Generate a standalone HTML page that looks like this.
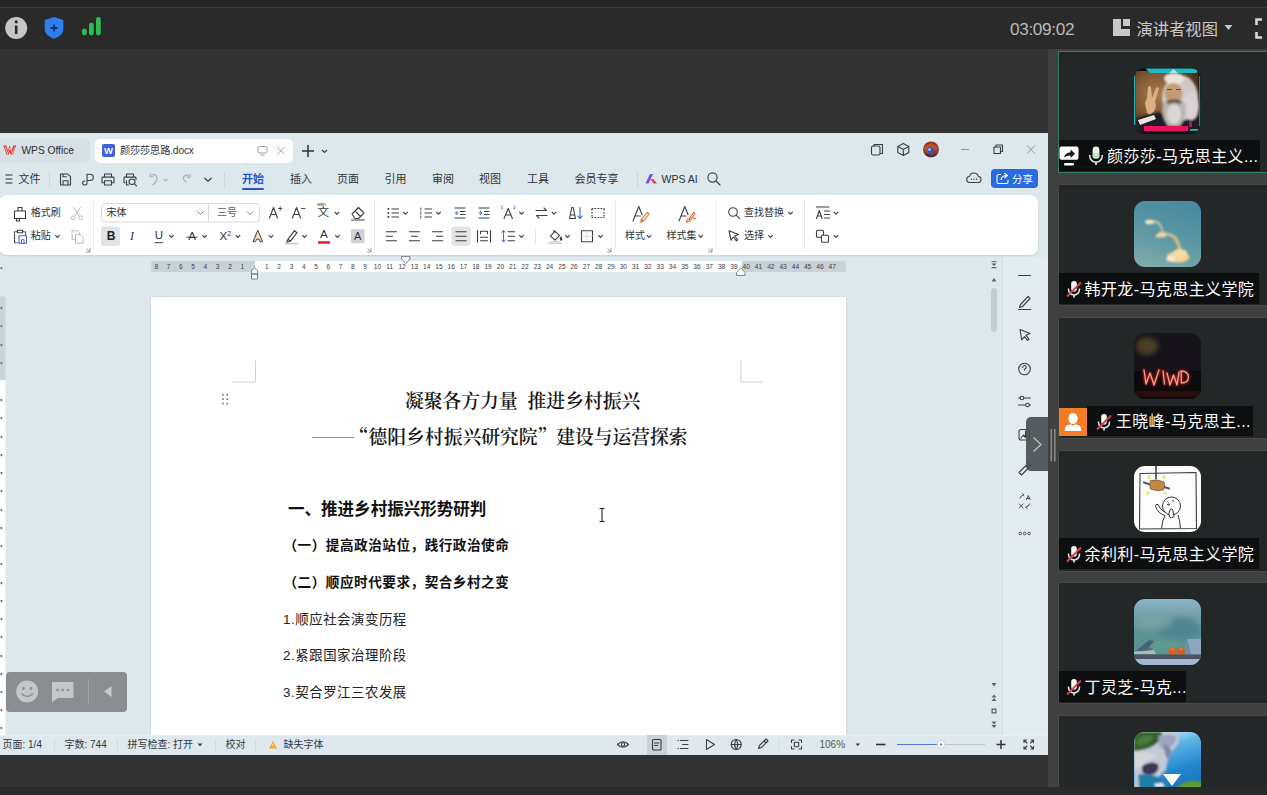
<!DOCTYPE html>
<html lang="zh-CN">
<head>
<meta charset="utf-8">
<title>会议 - 颜莎莎思路.docx</title>
<style>
*{box-sizing:border-box;margin:0;padding:0}
html,body{width:1267px;height:795px;overflow:hidden;background:#333333}
body{position:relative;font-family:"Liberation Sans","Noto Sans CJK SC",sans-serif;color:#222;font-size:12px}
.abs{position:absolute}
svg{position:absolute;overflow:visible}
/* meeting frame */
#topstrip{left:0;top:0;width:1267px;height:8px;background:#262626;border-bottom:1px solid #3b3b3b}
#topbar{left:0;top:8px;width:1267px;height:41px;background:#2a2a2a}
#bottomband{left:0;top:787px;width:1267px;height:8px;background:#2a2a2a}
#rightpanel{left:1048px;top:49px;width:219px;height:738px;background:#404040}
.tile{left:1058px;width:216px;height:122px;background:#232728;border:1.500px solid #464a4b;border-radius:2px}
.tile.active{border:1.500px solid #2e7d63;border-radius:0}
.avatar{left:74.500px;top:15.700px;width:67px;height:66px;border-radius:11px;overflow:hidden}
.label{left:0;top:87.500px;height:31.300px;background:#0c0e0f;color:#fff;font-size:16px;line-height:31.300px;letter-spacing:0.400px;white-space:nowrap;font-family:"Liberation Sans","Noto Sans CJK SC",sans-serif}
.time{color:#b9b9b9;font-size:17.200px;left:1010px;top:19px;line-height:20px;letter-spacing:-0.350px}
.view{color:#c9c9c9;font-size:16.300px;left:1136.500px;top:17.500px;line-height:22px}
/* WPS */
#wpsbg{left:0;top:133px;width:1048px;height:622px;background:#dde8ec}
#wps{left:0;top:0;width:1048px;height:755px;background:transparent;overflow:hidden}
#wps .t{position:absolute;white-space:nowrap;color:#30353a;font-size:11px;line-height:14px}
#wps .m{font-size:11px;top:172px;color:#2e3338}
#wps .r{font-size:10px;color:#2e3338}
#wps .s{font-size:10px;top:738px;color:#33383d}
.ic{stroke:#3a3f44;stroke-width:1.1;fill:none;stroke-linecap:round;stroke-linejoin:round}
.ar{fill:#444}
#ribbon{left:-1px;top:194.500px;width:1038.500px;height:60px;box-shadow:0 1px 2px rgba(150,170,180,.35);background:#fff;border-radius:8px}
#page{left:151px;top:297px;width:695px;height:440px;background:#fff;box-shadow:0 0 2px rgba(120,140,150,.35)}
.doc{position:absolute;white-space:nowrap;color:#111}
.serif{font-family:"Liberation Serif","Noto Serif CJK SC",serif;font-weight:600;color:#161616}
.hei{font-family:"Liberation Sans","Noto Sans CJK SC",sans-serif;font-weight:700}
.q{font-family:"Noto Serif CJK SC",serif;display:inline-block;width:18.780px;text-align:center}
.rn{position:absolute;top:262px;font-size:6.600px;line-height:9px;color:#3c4146;width:14px;text-align:center;font-weight:400}

</style>
</head>
<body>
<div id="topstrip" class="abs"></div>
<div id="topbar" class="abs"></div>
<div id="rightpanel" class="abs"></div>
<div id="bottomband" class="abs"></div>

<!-- top bar icons -->
<svg class="abs" style="left:0;top:0" width="120" height="49" viewBox="0 0 120 49">
  <circle cx="16.2" cy="28" r="11" fill="#c6c6c6"/>
  <rect x="14.9" y="25.5" width="2.6" height="8.5" fill="#2a2a2a"/>
  <circle cx="16.2" cy="21.8" r="1.6" fill="#2a2a2a"/>
  <path d="M54 17 L63.3 20 L63.3 30 Q63.3 35 54 38.8 Q44.7 35 44.7 30 L44.7 20 Z" fill="#2d7ff0"/>
  <path d="M50.5 28h7M54 24.5v7" stroke="#14305c" stroke-width="1.8" fill="none"/>
  <rect x="82" y="28.5" width="4.8" height="7" rx="2.4" fill="#2ebd52"/>
  <rect x="89" y="22.8" width="4.8" height="12.7" rx="2.4" fill="#2ebd52"/>
  <rect x="96" y="17" width="4.8" height="18.5" rx="2.4" fill="#2ebd52"/>
</svg>
<div class="abs time">03:09:02</div>
<svg class="abs" style="left:1113px;top:19px" width="18" height="18" viewBox="0 0 18 18">
  <path d="M0 0h8v10h9v7h-17z" fill="#c9c9c9"/>
  <rect x="10" y="0" width="7" height="7" fill="#c9c9c9"/>
</svg>
<div class="abs view">演讲者视图</div>
<svg class="abs" style="left:1224px;top:24px" width="10" height="8" viewBox="0 0 10 8"><path d="M0.5 1h8l-4 5z" fill="#c9c9c9"/></svg>
<svg class="abs" style="left:1255.300px;top:18px" width="13" height="22" viewBox="0 0 13 22">
  <path d="M7 1.5H1.5V7M1.5 14v5.5H7" stroke="#d8d8d8" stroke-width="2.6" fill="none"/>
</svg>

<svg class="abs" style="left:1049px;top:426px" width="9" height="37" viewBox="0 0 9 37"><path d="M2.300 3v32.500M5.800 3v32.500" stroke="#8c8c8c" stroke-width="1.500"/></svg>
<!-- TILES -->
<div class="abs tile active" style="top:51.300px" id="t1"><div class="abs avatar"><svg width="67" height="66" viewBox="0 0 67 66" style="left:0;top:0">
<defs><radialGradient id="g1" cx="35%" cy="40%" r="75%"><stop offset="0" stop-color="#a97c52"/><stop offset="0.55" stop-color="#7c5230"/><stop offset="1" stop-color="#3c2616"/></radialGradient>
<filter id="b1" x="-20%" y="-20%" width="140%" height="140%"><feGaussianBlur stdDeviation="1.1"/></filter><filter id="b1s" x="-20%" y="-20%" width="140%" height="140%"><feGaussianBlur stdDeviation="0.5"/></filter></defs>
<rect width="67" height="66" fill="#0d1114"/>
<rect x="1.500" y="3" width="63" height="58" fill="url(#g1)"/>
<g filter="url(#b1)">
<path d="M2 50l22-6l16 6l26-4v18H2z" fill="#1d1f27"/>
<ellipse cx="46" cy="30" rx="18" ry="23" fill="#cfcac6"/>
<ellipse cx="57" cy="38" rx="8" ry="14" fill="#d9d3d6"/>
<ellipse cx="40" cy="10.500" rx="10" ry="5.500" fill="#e9e4dc"/>
<ellipse cx="39.500" cy="25" rx="9" ry="10" fill="#c69a73"/>
<path d="M29 35q10-7 22 0q3 12-5 23h-12q-8-11-5-23z" fill="#b7b4b1"/>
<ellipse cx="40" cy="46" rx="7" ry="10" fill="#d9d7d4"/>
<path d="M32 33q8-4 16 0l-2 3q-6-2-12 0z" fill="#6a5a4c"/>
</g>
<g filter="url(#b1s)">
<path d="M13 45l-2-10l2-5l1-11q1.500-2 3 0l1 11l4-10q2-1.500 3 .5l-4 13q2 5-1 10l-4 3z" fill="#dcb080"/>
<path d="M4 52l16-5l2 4l-16 6z" fill="#ebe6df"/>
<path d="M33 21.500h5M42 21.500h5" stroke="#6b4c35" stroke-width="1.200"/>
</g>
<rect x="10" y="58" width="44" height="5" fill="#e8125e"/>
<path d="M55 54l3 0v5l-3 0z" fill="#d91a5f" opacity=".8"/>
<path d="M11.500 0.500h53.500l-2.500 4.500H16z" fill="#1fb9c0"/><rect x="0" y="7" width="1.300" height="50" fill="#21b0b8"/><rect x="65" y="8" width="1.200" height="50" fill="#1a8b93"/><rect x="56" y="61" width="8" height="1.800" fill="#27b3ae"/>
<path d="M35 5l4.500-4l4.500 4z" fill="#a9e4e0"/>
</svg></div><div class="abs label" style="left:0px;width:201px"><svg style="left:0px;top:6.5px" width="21" height="22" viewBox="0 0 21 22"><rect x="0.5" y="0.5" width="19" height="13.3" rx="2" fill="#fff"/><rect x="5" y="17" width="10" height="2.4" rx="1.2" fill="#fff"/><path d="M5 11.5q1-5 6.5-5.2V3.6l4.6 4.2l-4.6 4.2V9.4q-4 0-6.500 2.100z" fill="#1a1d1f"/></svg><svg style="left:29px;top:6px" width="16" height="20" viewBox="0 0 16 20"><rect x="4.6" y="0.5" width="6.8" height="12" rx="3.4" fill="#e9f3ea"/><rect x="4.6" y="7" width="6.8" height="5.5" rx="2.6" fill="#bfe5c4"/><path d="M1.8 9v1a6.2 6.2 0 0 0 12.4 0v-1" stroke="#e4e4e4" stroke-width="1.6" fill="none"/><path d="M8 16v3" stroke="#e4e4e4" stroke-width="1.8"/></svg><span class="abs" style="left:48px;top:1px">颜莎莎-马克思主义...</span></div></div>
<div class="abs tile" style="top:184px" id="t2"><div class="abs avatar"><svg width="68" height="67" viewBox="0 0 68 67" style="left:0;top:0">
<defs><linearGradient id="g2" x1="0.600" y1="0" x2="0.300" y2="1"><stop offset="0" stop-color="#4a8aa2"/><stop offset="0.5" stop-color="#5b96a3"/><stop offset="1" stop-color="#7eaba9"/></linearGradient>
<filter id="b2" x="-30%" y="-30%" width="160%" height="160%"><feGaussianBlur stdDeviation="0.9"/></filter></defs>
<rect width="68" height="67" fill="url(#g2)"/>
<g filter="url(#b2)">
<path d="M19 20q8 1 9.500 10" stroke="#d9c8a0" stroke-width="1.800" fill="none"/>
<path d="M33 33q11 2 12.500 17" stroke="#e6b98a" stroke-width="2.600" fill="none"/>
<path d="M34.500 32q11 2 12.500 17" stroke="#9fd07a" stroke-width="1" fill="none"/>
<ellipse cx="15.600" cy="21" rx="4.500" ry="2.300" fill="#f5e6b8"/>
<path d="M21 36.500q3-7 10-5.500q3 2 1 5q-6 .5-11 .5z" fill="#f3d5a4"/>
<ellipse cx="44" cy="56" rx="11.500" ry="5.600" fill="#f4d296"/>
<ellipse cx="46" cy="52" rx="7" ry="4" fill="#f7dda6"/>
<ellipse cx="37" cy="58" rx="4.500" ry="2.800" fill="#f9ecd0"/>
</g>
</svg></div><div class="abs label" style="left:0px;width:200px"><svg style="left:7px;top:7px" width="16" height="19" viewBox="0 0 16 19"><rect x="5.2" y="1" width="5.6" height="10.5" rx="2.8" fill="#fff"/><path d="M2.5 8.5v1a5.5 5.5 0 0 0 11 0v-1" stroke="#e8e8e8" stroke-width="1.5" fill="none"/><path d="M8 15v2.6" stroke="#e8e8e8" stroke-width="1.6"/><path d="M1 16.5L15 2.5" stroke="#d8434a" stroke-width="1.9"/></svg><span class="abs" style="left:25.5px;top:1px">韩开龙-马克思主义学院</span></div></div>
<div class="abs tile" style="top:316.800px" id="t3"><div class="abs" style="left:0.300px;top:89.900px;width:27.500px;height:28px;background:#f47c25"><svg style="left:5px;top:4px" width="18" height="20" viewBox="0 0 18 20"><ellipse cx="9" cy="6.5" rx="4.6" ry="5.6" fill="#fff"/><path d="M0.5 19q0-6 6-6.800l2.500 1.500l2.500-1.500q6 .8 6 6.800z" fill="#fff"/></svg></div><div class="abs avatar"><svg width="68" height="67" viewBox="0 0 68 67" style="left:0;top:0">
<defs><filter id="b3" x="-30%" y="-30%" width="160%" height="160%"><feGaussianBlur stdDeviation="2.500"/></filter><filter id="b3s" x="-30%" y="-30%" width="160%" height="160%"><feGaussianBlur stdDeviation="1.200"/></filter></defs>
<rect width="68" height="67" fill="#16141a"/>
<rect x="0" y="38" width="68" height="29" fill="#0c0a0d"/>
<ellipse cx="13" cy="13" rx="11" ry="9" fill="#4a3f27" filter="url(#b3)"/>
<rect x="0" y="58" width="68" height="6" fill="#2a0c10" filter="url(#b3s)"/>
<g fill="none" stroke-linejoin="round" stroke-linecap="round">
<g stroke="#b0201c" stroke-width="3.200" filter="url(#b3s)" opacity=".85"><path d="M10 37l2 14l4-11l4 12l5-15M29 38l1.500 13M33 40l3 12l3.500-10l3.500 10l2-13M47 38l.5 12q7 0 7-6q-.5-6-7.500-6"/></g>
<g stroke="#f0a08e" stroke-width="1.300"><path d="M10 37l2 14l4-11l4 12l5-15M29 38l1.500 13M33 40l3 12l3.500-10l3.500 10l2-13M47 38l.5 12q7 0 7-6q-.5-6-7.500-6"/></g>
</g>
</svg></div><div class="abs label" style="left:27.800px;width:166px;top:88.200px;height:30.300px;line-height:30.300px"><svg style="left:9px;top:7px" width="16" height="19" viewBox="0 0 16 19"><rect x="5.2" y="1" width="5.6" height="10.5" rx="2.8" fill="#fff"/><path d="M2.5 8.5v1a5.5 5.5 0 0 0 11 0v-1" stroke="#e8e8e8" stroke-width="1.5" fill="none"/><path d="M8 15v2.6" stroke="#e8e8e8" stroke-width="1.6"/><path d="M1 16.5L15 2.5" stroke="#d8434a" stroke-width="1.9"/></svg><span class="abs" style="left:29px;top:1px">王晓峰-马克思主...</span></div></div>
<div class="abs tile" style="top:449.500px" id="t4"><div class="abs avatar"><svg width="68" height="67" viewBox="0 0 68 67" style="left:0;top:0">
<rect width="68" height="67" fill="#fdfdfd"/>
<path d="M6 7.500l56-1l.5 56l-57 .5z" fill="none" stroke="#3a3a3e" stroke-width="1.100"/>
<path d="M22 0v13.500" stroke="#3a3a3e" stroke-width="1.500"/>
<g fill="#e3ee9a" opacity=".9"><ellipse cx="15" cy="11" rx="2" ry="2.500"/><ellipse cx="30" cy="11" rx="2" ry="2.500"/><ellipse cx="14" cy="27" rx="2.500" ry="2"/><ellipse cx="31" cy="27" rx="2" ry="2"/></g>
<path d="M10 16.500l6 2M30 21l5 1.500" stroke="#555a66" stroke-width="2.200" stroke-linecap="round"/>
<path d="M16.500 14.500q7-1.500 13.500 1.500q1.500 4-.5 8q-7 1.500-13-1q-1.500-4 0-8.500z" fill="#c28a47" stroke="#7a5528" stroke-width="0.800"/>
<circle cx="37.500" cy="40" r="9" fill="#fff" stroke="#333" stroke-width="1"/>
<path d="M27.500 62.500q1-9 3.500-13q-7-2-9.500-9q0-3 2.500-2q2 5 6.500 7.500M44 49q2 6 2.500 13.500" fill="none" stroke="#333" stroke-width="1"/>
<path d="M36 44q-2 3-.500 7q2 2 4.500-.5q-.500-4-1.500-7q-1.500-1.500-2.500.500z" fill="#fff" stroke="#333" stroke-width="1"/>
<path d="M33.500 35.500l1 .8M38 34.500l2 .600" stroke="#333" stroke-width="0.900"/><ellipse cx="34.500" cy="38.500" rx="1.600" ry="1.100" fill="#555"/>
</svg></div><div class="abs label" style="left:0px;width:200px"><svg style="left:7px;top:7px" width="16" height="19" viewBox="0 0 16 19"><rect x="5.2" y="1" width="5.6" height="10.5" rx="2.8" fill="#fff"/><path d="M2.5 8.5v1a5.5 5.5 0 0 0 11 0v-1" stroke="#e8e8e8" stroke-width="1.5" fill="none"/><path d="M8 15v2.6" stroke="#e8e8e8" stroke-width="1.6"/><path d="M1 16.5L15 2.5" stroke="#d8434a" stroke-width="1.9"/></svg><span class="abs" style="left:25.5px;top:1px">余利利-马克思主义学院</span></div></div>
<div class="abs tile" style="top:582.200px" id="t5"><div class="abs avatar"><svg width="68" height="67" viewBox="0 0 68 67" style="left:0;top:0">
<defs><linearGradient id="g5" x1="0" y1="0" x2="0" y2="1"><stop offset="0" stop-color="#8ab4c8"/><stop offset="0.18" stop-color="#79a7b0"/><stop offset="0.5" stop-color="#5e9294"/><stop offset="0.8" stop-color="#5a9290"/></linearGradient>
<filter id="b5" x="-30%" y="-30%" width="160%" height="160%"><feGaussianBlur stdDeviation="3"/></filter><filter id="b5s" x="-30%" y="-30%" width="160%" height="160%"><feGaussianBlur stdDeviation="0.500"/></filter></defs>
<rect width="68" height="67" fill="url(#g5)"/>
<g filter="url(#b5)"><ellipse cx="44" cy="30" rx="22" ry="12" fill="#4f8590"/><ellipse cx="20" cy="22" rx="18" ry="8" fill="#74a3a0"/><ellipse cx="34" cy="46" rx="16" ry="7" fill="#5e9a8e"/></g>
<g filter="url(#b5s)">
<path d="M2 52l13-11l5 1l-9 11z" fill="#47607c"/><path d="M0 53l16-3q5 0 6 5h-22z" fill="#aeb6c0"/><path d="M6 51l12-2l1 2l-13 1.500z" fill="#5d6670"/>
<path d="M53 40h15v16h-11z" fill="#8fa6bf"/><path d="M50 50l3-10l4 16h-5z" fill="#6f8fa6"/>
<ellipse cx="38.500" cy="52.500" rx="4" ry="4" fill="#dd6124"/><ellipse cx="47" cy="52.500" rx="4" ry="4" fill="#d95a22"/><path d="M36.500 50.500q2-1.500 4 0M45 50.500q2-1.500 4 0" stroke="#f09a5a" stroke-width="1" fill="none"/>
</g>
<rect x="0" y="55.500" width="68" height="4.500" fill="#4a5562"/>
<rect x="0" y="60" width="68" height="7" fill="#a7b6d0"/>
</svg></div><div class="abs label" style="left:0px;width:127px"><svg style="left:7px;top:7px" width="16" height="19" viewBox="0 0 16 19"><rect x="5.2" y="1" width="5.6" height="10.5" rx="2.8" fill="#fff"/><path d="M2.5 8.5v1a5.5 5.5 0 0 0 11 0v-1" stroke="#e8e8e8" stroke-width="1.5" fill="none"/><path d="M8 15v2.6" stroke="#e8e8e8" stroke-width="1.6"/><path d="M1 16.5L15 2.5" stroke="#d8434a" stroke-width="1.9"/></svg><span class="abs" style="left:25.5px;top:1px">丁灵芝-马克...</span></div></div>
<div class="abs tile" style="top:714.900px;height:72.100px;overflow:hidden;border-bottom:none" id="t6"><div class="abs avatar"><svg width="68" height="67" viewBox="0 0 68 67" style="left:0;top:0">
<defs><linearGradient id="g6" x1="0.300" y1="0" x2="0.600" y2="1"><stop offset="0" stop-color="#d8eefa"/><stop offset="0.25" stop-color="#5fb4e6"/><stop offset="0.6" stop-color="#2288d0"/><stop offset="1" stop-color="#1569b4"/></linearGradient>
<filter id="b6" x="-30%" y="-30%" width="160%" height="160%"><feGaussianBlur stdDeviation="0.800"/></filter></defs>
<rect width="68" height="67" fill="url(#g6)"/>
<g filter="url(#b6)">
<path d="M0 0h44q2 6 0 12q-5 6-8 12q-4 8-4 14l-6 6l-16 8l-10 0z" fill="#c2c9d4"/>
<path d="M0 0h28q-1 8-6 12q-8 6-22 7z" fill="#35602f"/>
<path d="M4 6q8-4 16-2q-2 6-8 8q-6 2-10 0z" fill="#4b7a3a"/>
<path d="M24 4q8-2 18 0q1 4-2 8q-4 2-6 8q-6-2-8-6q-2-6-2-10z" fill="#9aa6c0"/>
<path d="M30 12q6 2 8 8l-4 8q-4-6-4-16z" fill="#7d8aa8"/>
<path d="M8 34q8-6 16-2q2 6-4 10q-8 2-12-2z" fill="#3a3550"/>
<path d="M0 20q12-2 24 4q-10 4-16 10l-8 4z" fill="#d3d6da"/>
<path d="M0 44q10-4 22 0l10 8l10 14H0z" fill="#1f7ea8"/>
<path d="M0 42l4 0l2 24H0z" fill="#bfc8cc"/>
<path d="M44 54q10-8 24-4v17H42z" fill="#5f9a38"/><path d="M50 58q6-4 12-2q-2 6-8 6z" fill="#9ab83e"/>
<path d="M20 52l8-1l3 3l-9 1z" fill="#f4f6f8"/>
</g>
</svg></div><svg style="left:104.200px;top:58px" width="18" height="12" viewBox="0 0 18 12"><path d="M0 0h18l-9 12z" fill="#fff"/></svg></div>

<!-- WPS WINDOW -->
<div id="wpsbg" class="abs"></div>
<div id="wps" class="abs">

<div class="abs" style="left:-6px;top:139px;width:96px;height:24px;background:#d6e0e5;border-radius:5px"></div>
<svg style="left:2.800px;top:145.300px" width="14" height="10" viewBox="0 0 14 10"><path d="M0.300 0.600h3.100l1.400 4.600l2-4.600l2 4.600l1.400-4.600h3.100l-3.200 9h-2.300l-1-2.700l-1 2.700h-2.300z" fill="#e0392f"/><path d="M2 1.600l2.500 7M7 2.800l-2.500 5.800M7 2.800l2.500 5.800M12 1.600l-2.500 7" stroke="#fbeceb" stroke-width="0.700" fill="none"/></svg>
<div class="t" style="left:21.500px;top:144px;font-size:10.200px;color:#2b2f33">WPS Office</div>
<div class="abs" style="left:95px;top:138.500px;width:198px;height:24.500px;background:#fff;border-radius:5px"></div>
<div class="abs" style="left:101.500px;top:144px;width:13.500px;height:13px;background:#3d63d8;border-radius:2px"></div>
<div class="t" style="left:104px;top:144px;font-size:9.500px;color:#fff;font-weight:700;line-height:13px">W</div>
<div class="t" style="left:120px;top:144px;font-size:10.200px;letter-spacing:-0.150px">颜莎莎思路.docx</div>
<svg style="left:257px;top:145px" width="32" height="12" viewBox="0 0 32 12"><rect x="1" y="1.500" width="9" height="6.500" rx="1.200" stroke="#9aa0a6" stroke-width="1" fill="none"/><path d="M3.500 10h4" stroke="#9aa0a6" stroke-width="1"/><path d="M20 2l7.500 7.500M27.500 2l-7.500 7.500" stroke="#a0a5aa" stroke-width="1"/></svg>
<svg style="left:301px;top:144px" width="30" height="14" viewBox="0 0 30 14"><path d="M7 1v12M1 7h12" stroke="#2b2f33" stroke-width="1.500"/><path d="M21 6l2.500 2.500l2.500-2.500" stroke="#3a3f44" stroke-width="1.200" fill="none"/></svg>
<svg style="left:868px;top:141.300px" width="175" height="18" viewBox="0 0 175 18">
<rect x="3.500" y="5" width="8.500" height="9" rx="1.500" class="ic"/><path d="M6 5v-1.500h8.500v9h-2" class="ic"/>
<path d="M35.300 2.500l5.500 3v6l-5.500 3l-5.500-3v-6z M29.800 5.500l5.500 3l5.500-3M35.300 8.500v6" class="ic" stroke-width="0.950"/>
<circle cx="63" cy="8.500" r="8" fill="#8f3a26"/><path d="M56 6q7-7 14 0q-1 4-4 3q-5 0-6 3q-4-2-4-6z" fill="#b8532e"/><circle cx="62.500" cy="9.500" r="3.200" fill="#3a57b0"/><path d="M58 13q5 4 10 0" stroke="#40305a" stroke-width="2" fill="none"/><circle cx="61.500" cy="8.500" r="1.200" fill="#c9d4f0"/>
<path d="M93 8.500h8" stroke="#8a9096" stroke-width="1"/>
<rect x="126" y="6" width="6.500" height="6.500" class="ic" stroke="#7d848a" stroke-width="0.900"/><path d="M128 6v-2h6.500v6.500h-2" class="ic" stroke="#7d848a" stroke-width="0.900"/>
<path d="M159 4.500l8 8M167 4.500l-8 8" stroke="#8a9096" stroke-width="1"/>
</svg>

<svg style="left:4px;top:172px" width="12" height="14" viewBox="0 0 12 14"><path d="M1.500 3h7M1.500 7h7M1.500 11h7" stroke="#2e3338" stroke-width="1.100"/></svg>
<div class="t m" style="left:18.500px">文件</div>
<div class="abs" style="left:48.500px;top:172px;width:1px;height:15px;background:#cdd6db"></div>
<svg style="left:58px;top:171px" width="160" height="17" viewBox="0 0 160 17"><g transform="translate(0,0.600) scale(1,0.920)">
<path d="M2.500 2.500h7l3 3v9h-10z M5 14.500v-4.500h5v4.500 M5 2.500v3h3.500" class="ic"/>
<path d="M29 3h3a3.300 3.300 0 0 1 0 6.600h-3v-6.600v9.500a2.200 2.200 0 1 1-2.200-2.200" class="ic"/>
<path d="M46.500 6v-3.500h7v3.500 M45 6h10a1 1 0 0 1 1 1v5h-2.500 M46.500 12h-2.500v-5a1 1 0 0 1 1-1 M46.500 10h7v4.500h-7z" class="ic"/>
<path d="M68.500 6v-3.500h7v3.500 M67 12h-1v-5a1 1 0 0 1 1-1h10a1 1 0 0 1 1 1v1.500" class="ic"/><circle cx="74" cy="11" r="3" class="ic"/><path d="M76.200 13.200l2.300 2.300M68.500 10v4.500h2" class="ic"/>
<path d="M93 3.500q6-1 6 4q0 3.500-4.500 7" stroke="#aab1b7" stroke-width="1.200" fill="none"/><path d="M92 2v3.500h3.500" stroke="#aab1b7" stroke-width="1.100" fill="none"/>
<path d="M105.500 8l2 2l2-2" stroke="#aab1b7" stroke-width="1.100" fill="none"/>
<path d="M131 4q-6-1-5.500 4q.5 2 3 3.500" stroke="#aab1b7" stroke-width="1.200" fill="none"/><path d="M132 2.500v3.500h-3.500" stroke="#aab1b7" stroke-width="1.100" fill="none"/>
<path d="M146.500 7l3.500 3.500l3.500-3.500" stroke="#3a3f44" stroke-width="1.300" fill="none"/>
</g></svg>
<div class="abs" style="left:224px;top:172px;width:1px;height:15px;background:#cdd6db"></div>
<div class="t m" style="left:242px;color:#2a55c9;font-weight:700;font-family:'Liberation Sans','Noto Sans CJK SC',sans-serif">开始</div>
<div class="abs" style="left:242px;top:188px;width:22px;height:2px;background:#2a55c9;border-radius:1px"></div>
<div class="t m" style="left:290px">插入</div>
<div class="t m" style="left:337px">页面</div>
<div class="t m" style="left:384.500px">引用</div>
<div class="t m" style="left:432px">审阅</div>
<div class="t m" style="left:479px">视图</div>
<div class="t m" style="left:527px">工具</div>
<div class="t m" style="left:574.500px">会员专享</div>
<div class="abs" style="left:636.500px;top:172px;width:1px;height:15px;background:#cdd6db"></div>
<svg style="left:645px;top:172px" width="13" height="14" viewBox="0 0 13 14"><path d="M0.500 11.500l4.500-9.500h3l-4.500 9.500z" fill="#7a4de8"/><path d="M5.500 7l3 0l3.500 4.500h-3.500z" fill="#e8406a"/></svg>
<div class="t m" style="left:661.500px;font-size:10.500px">WPS AI</div>
<svg style="left:706px;top:171px" width="16" height="16" viewBox="0 0 16 16"><circle cx="6.500" cy="6.500" r="4.600" class="ic" stroke-width="1.200"/><path d="M10 10l4 4" class="ic" stroke-width="1.200"/></svg>
<svg style="left:966px;top:171px" width="16" height="14" viewBox="0 0 16 14"><path d="M4 11.500a3 3 0 0 1-.5-6a4.500 4.500 0 0 1 8.800 0a3 3 0 0 1-.5 6z" class="ic"/><circle cx="5.500" cy="8.200" r=".7" fill="#3a3f44"/><circle cx="8" cy="8.200" r=".7" fill="#3a3f44"/><circle cx="10.500" cy="8.200" r=".7" fill="#3a3f44"/></svg>
<div class="abs" style="left:990.500px;top:168.500px;width:47px;height:19.500px;background:#2a6ae0;border-radius:4px"></div>
<svg style="left:996px;top:172px" width="14" height="13" viewBox="0 0 14 13"><path d="M5 2.500h-2.500a1.500 1.500 0 0 0-1.500 1.500v6a1.500 1.500 0 0 0 1.500 1.500h8a1.500 1.500 0 0 0 1.500-1.500v-2" stroke="#fff" stroke-width="1.100" fill="none"/><path d="M5 8q.5-4.500 6-4.500M8.500 1l2.800 2.500l-2.800 2.500" stroke="#fff" stroke-width="1.100" fill="none"/></svg>
<div class="t" style="left:1012px;top:171.500px;font-size:10.500px;color:#fff">分享</div>

<div id="ribbon" class="abs"></div>
<svg style="left:0;top:195px" width="1040" height="62" viewBox="0 0 1040 62"><g class="ic"><path d="M14.500 16h11v7.500h-11z M18 16v-3.500h4v3.500 M16.500 23.5v2.500h3v-2.500"/></g><g stroke="#b7bdc2" stroke-width="1" fill="none"><path d="M73.500 12l6 9.500M80.500 12l-6 9.500"/><circle cx="73.300" cy="22.8" r="1.900"/><circle cx="80.700" cy="22.8" r="1.900"/></g><g class="ic"><path d="M17.500 36.69999999999999h-3v11h3 M22.500 36.69999999999999h3v3" stroke-dasharray="1.600 1.200"/><path d="M17.500 35.19999999999999h5v2.500h-5z"/><rect x="19" y="40.69999999999999" width="7.500" height="7.500" stroke="#3a63c8"/><path d="M21.500 48.19999999999999v-3.500h2.500v3.500" stroke="#3a63c8" stroke-width="0.900"/></g><path d="M55.3 40.1l2.200 2.300l2.200-2.300" stroke="#444" stroke-width="1.200" fill="none"/><g stroke="#b7bdc2" stroke-width="1" fill="none"><path d="M72 35.69999999999999h5.500l2 2v6.500h-7.500z"/><path d="M75.500 39.69999999999999h5.500l2 2v6.500h-7.500z" fill="#fff"/></g><path d="M86 57h4v-4M90 57l-3.500-3.500" stroke="#8a9096" stroke-width="0.900" fill="none"/><path d="M93.500 5v49" stroke="#e6eaed" stroke-width="1"/><rect x="101.500" y="8.500" width="158" height="18.500" rx="3" fill="#fff" stroke="#d5dade" stroke-width="1"/><path d="M208.500 9v17.500" stroke="#d5dade"/><path d="M197.500 16.5l3 3l3-3M247 16.5l3 3l3-3" stroke="#7d848a" stroke-width="1" fill="none"/><g class="ic" stroke-width="1.100"><path d="M269.500 23l4-10.500l4 10.500M271 19.5h5"/><path d="M278.500 13.5h3.500M280.200 11.8v3.500" stroke-width="0.900"/><path d="M292.500 23l4-10.500l4 10.500M294 19.5h5"/><path d="M301.500 13.5h3.500" stroke-width="0.900"/></g><path d="M334.8 16.9l2.200 2.300l2.200-2.300" stroke="#444" stroke-width="1.200" fill="none"/><g class="ic" stroke-width="1.100"><path d="M352 19l6.500-6.500l5.500 5.500l-5.500 5.500h-3.500z M355 16l5.500 5.500M351.500 25h13"/></g><rect x="101" y="31.49999999999999" width="19" height="19.400" rx="3" fill="#e1e3e5"/><rect x="451.500" y="31.49999999999999" width="19" height="19.400" rx="3" fill="#e1e3e5"/><rect x="351" y="34.19999999999999" width="13.500" height="14" fill="#cfd2d5"/><path d="M169.3 40.1l2.200 2.300l2.200-2.300" stroke="#444" stroke-width="1.200" fill="none"/><path d="M202.3 40.1l2.200 2.300l2.200-2.300" stroke="#444" stroke-width="1.200" fill="none"/><path d="M235.8 40.1l2.200 2.300l2.200-2.300" stroke="#444" stroke-width="1.200" fill="none"/><path d="M268.8 40.1l2.200 2.300l2.200-2.300" stroke="#444" stroke-width="1.200" fill="none"/><path d="M302.3 40.1l2.200 2.300l2.200-2.300" stroke="#444" stroke-width="1.200" fill="none"/><path d="M335.3 40.1l2.200 2.300l2.200-2.300" stroke="#444" stroke-width="1.200" fill="none"/><path d="M154.500 47.69999999999999h8.500" stroke="#3a3f44" stroke-width="1"/><path d="M186.500 42.19999999999999h11" stroke="#3a3f44" stroke-width="1"/><path d="M253 46.69999999999999l4.800-11.500l4.800 11.500h-2.600l-.9-2.500h-2.600l-.9 2.500z" fill="#f3dfc4" stroke="#4a4035" stroke-width="1" stroke-linejoin="round"/><g class="ic" stroke-width="1"><path d="M288 44.19999999999999l6.500-8.500l2.500 2l-6.500 8.500z M288 44.19999999999999l-1.200 3l3.200-1"/><path d="M285.500 48.69999999999999h12" stroke="#c9ccd0" stroke-width="1.800"/></g><rect x="318" y="46.19999999999999" width="12" height="2.600" fill="#e0242c"/><path d="M374.500 5v49" stroke="#e6eaed" stroke-width="1"/><g stroke="#3a3f44" stroke-width="1.100" fill="none"><path d="M391.500 14h7.500M391.500 18h7.500M391.500 22h7.500"/></g><g fill="#3a3f44"><circle cx="388.300" cy="14" r="1"/><circle cx="388.300" cy="18" r="1"/><circle cx="388.300" cy="22" r="1"/></g><path d="M403.3 16.9l2.200 2.300l2.200-2.300" stroke="#444" stroke-width="1.200" fill="none"/><g stroke="#3a3f44" stroke-width="1.100" fill="none"><path d="M424.500 14h7.500M424.500 18h7.500M424.500 22h7.500"/><path d="M420.800 12.5v3M420.800 16.5v3M420.800 20.5v3" stroke-width="0.900"/></g><path d="M436.3 16.9l2.200 2.300l2.200-2.300" stroke="#444" stroke-width="1.200" fill="none"/><g stroke="#3a3f44" stroke-width="1" fill="none"><path d="M454.500 13h11M460 16.5h5.500M460 19.5h5.500M454.500 23h11"/><path d="M457.500 16l-2 2l2 2M455.500 18h3" stroke="#2a62d0"/></g><g stroke="#3a3f44" stroke-width="1" fill="none"><path d="M478.500 13h11M484 16.5h5.500M484 19.5h5.500M478.500 23h11"/><path d="M480 16l2 2l-2 2M478.500 18h3.500" stroke="#2a62d0"/></g><g class="ic" stroke-width="1.100"><path d="M504 23.5l4.200-10l4.200 10M505.500 20h5.400"/><path d="M502.500 14l-1 -1.500l1-1.500M514 14l1-1.500l-1-1.500" stroke="#2a62d0" stroke-width="0.900"/></g><path d="M519.3 16.9l2.200 2.300l2.200-2.300" stroke="#444" stroke-width="1.200" fill="none"/><g class="ic" stroke-width="1.100"><path d="M536 15.5h10.500l-2.500-2.500M547 20.5h-10.500l2.500 2.500"/></g><path d="M551.8 16.9l2.200 2.300l2.200-2.300" stroke="#444" stroke-width="1.200" fill="none"/><g class="ic" stroke-width="1"><path d="M569.500 23.5l2.300-11h1.400l2.300 11zM570.500 20h4"/><path d="M580 12.5v10.500M577.800 21l2.200 2.500l2.200-2.500" stroke="#2a62d0"/></g><g stroke="#3a3f44" stroke-width="1.200" fill="none"><path d="M591.500 13.5h13" stroke-dasharray="1.800 1.200"/><path d="M591.500 22.5h13" stroke-dasharray="1.800 1.200"/><path d="M592 14v8M604 14v8" stroke-dasharray="1.500 1.500"/></g><path d="M386.0 36.7h11 M386.0 41.2h7 M386.0 45.7h11" stroke="#3a3f44" stroke-width="1.100" fill="none"/><path d="M409.0 36.7h11 M411.0 41.2h7 M409.0 45.7h11" stroke="#3a3f44" stroke-width="1.100" fill="none"/><path d="M432.0 36.7h11 M436.0 41.2h7 M432.0 45.7h11" stroke="#3a3f44" stroke-width="1.100" fill="none"/><path d="M455.5 36.7h11 M455.5 41.2h11 M455.5 45.7h11" stroke="#3a3f44" stroke-width="1.100" fill="none"/><g class="ic" stroke-width="1"><path d="M477.500 35.19999999999999v12M490.500 35.19999999999999v12M480.500 42.19999999999999h7M480.500 45.69999999999999h7"/><path d="M480.500 38.69999999999999v-2.500h7v2.500"/></g><g class="ic" stroke-width="1.100"><path d="M508 36.69999999999999h6.500M508 41.19999999999999h6.500M508 45.69999999999999h6.500"/><path d="M503.500 35.69999999999999v11M501.800 37.39999999999999l1.700-1.900l1.700 1.900M501.800 44.999999999999986l1.700 1.900l1.700-1.900" stroke="#2a62d0" stroke-width="0.900"/></g><path d="M519.3 40.1l2.200 2.300l2.200-2.300" stroke="#444" stroke-width="1.200" fill="none"/><path d="M535.500 34.19999999999999v14" stroke="#e0e4e7" stroke-width="1"/><g class="ic" stroke-width="1"><path d="M550.500 41.19999999999999l4.500-5l4.500 4.500l-4.500 4.500z M553.500 35.69999999999999l1.500 1.500"/><path d="M561 42.19999999999999q1.500 2 0 3q-1.500-1 0-3z" fill="#3a3f44"/><path d="M548.500 48.19999999999999q6.500-4 13 0z" stroke="#c9ccd0" fill="#eceef0"/></g><path d="M565.3 40.1l2.200 2.300l2.200-2.300" stroke="#444" stroke-width="1.200" fill="none"/><rect x="581.500" y="35.69999999999999" width="11" height="11" class="ic" stroke-width="1.100"/><path d="M581.500 41.19999999999999h11M587 35.69999999999999v11" stroke="#d5d8db" stroke-width="0.800"/><path d="M598.3 40.1l2.200 2.300l2.200-2.300" stroke="#444" stroke-width="1.200" fill="none"/><path d="M367 57h4v-4M371 57l-3.500-3.500" stroke="#8a9096" stroke-width="0.900" fill="none"/><path d="M607 57h4v-4M611 57l-3.500-3.500" stroke="#8a9096" stroke-width="0.900" fill="none"/><path d="M708 57h4v-4M712 57l-3.500-3.500" stroke="#8a9096" stroke-width="0.900" fill="none"/><path d="M615.500 5v49M716 5v49M804.500 5v49" stroke="#e6eaed" stroke-width="1"/><g class="ic" stroke-width="1.100"><path d="M633 26l5.800-14.500l3.200 8M635.2 21h5"/><path d="M641.5 24.5l5.500-7l2 1.500l-5.500 7z M641.5 24.5l-.8 2.500l2.800-1" stroke="#e0662a"/></g><g class="ic" stroke-width="1.100"><path d="M679 26l5.800-14.500l3.200 8M681.2 21h5"/><path d="M689 24l4.500-6.500l1.500 1l-4.500 6.500z M689 24q-2.500 .5-2.500 3q2.500.5 4-2M692 22.5l3.500 1.500" stroke="#e0662a"/></g><path d="M646.8 40.1l2.200 2.300l2.200-2.300" stroke="#444" stroke-width="1.200" fill="none"/><path d="M698.6 40.1l2.200 2.300l2.200-2.300" stroke="#444" stroke-width="1.200" fill="none"/><circle cx="733" cy="17" r="4.300" class="ic" stroke-width="1.100"/><path d="M736.200 20.2l3.500 3.500" class="ic" stroke-width="1.100"/><path d="M788.3 16.9l2.200 2.300l2.200-2.300" stroke="#444" stroke-width="1.200" fill="none"/><path d="M729 35.69999999999999l9.500 3.800l-3.800 1.500l3 3.800l-1.300 1l-3-3.800l-2.400 3.200z" class="ic" stroke-width="1"/><path d="M768.3 40.1l2.200 2.300l2.200-2.300" stroke="#444" stroke-width="1.200" fill="none"/><g class="ic" stroke-width="1"><path d="M816.500 12h12.500M816.500 23.5l2.800-8l2.800 8M817.500 21h3.600M824.500 16h5M824.500 19.5h5M824.500 23h5"/></g><path d="M833.8 16.9l2.200 2.300l2.200-2.300" stroke="#444" stroke-width="1.200" fill="none"/><g class="ic" stroke-width="1" stroke="#3a5fb8"><rect x="816.500" y="35.19999999999999" width="7" height="7" rx="1"/><rect x="821.500" y="40.19999999999999" width="7" height="7" rx="1" fill="#fff"/></g><path d="M833.8 40.1l2.200 2.300l2.200-2.300" stroke="#444" stroke-width="1.200" fill="none"/></svg>
<div class="t" style="left:317px;top:201px;font-size:5px;line-height:6px;color:#3a3f44;letter-spacing:-0.200px">wén</div><div class="t" style="left:317.500px;top:205.500px;font-size:11.500px;line-height:13px;color:#3a3f44">文</div>
<div class="t r" style="left:30.800px;top:206px">格式刷</div>
<div class="t r" style="left:30.800px;top:229.200px">粘贴</div>
<div class="t r" style="left:106.500px;top:206px">宋体</div>
<div class="t r" style="left:217px;top:206px;color:#555a60">三号</div>
<div class="t" style="left:106.700px;top:228.500px;font-size:12px;font-weight:700;color:#222">B</div>
<div class="t" style="left:130px;top:228.500px;font-size:12px;font-style:italic;font-family:'Liberation Serif',serif;color:#333">I</div>
<div class="t" style="left:154.700px;top:228px;font-size:11.500px;color:#333">U</div>
<div class="t" style="left:188.200px;top:228.500px;font-size:11.500px;color:#333">A</div>
<div class="t" style="left:219.500px;top:228.500px;font-size:11.500px;color:#333">X<span style="font-size:7px;position:relative;top:-4px">2</span></div>
<div class="t" style="left:320px;top:227px;font-size:11.500px;color:#333">A</div>
<div class="t" style="left:354px;top:229px;font-size:11px;color:#333">A</div>
<div class="t r" style="left:625px;top:229.200px">样式</div>
<div class="t r" style="left:666.500px;top:229.200px">样式集</div>
<div class="t r" style="left:744px;top:206px">查找替换</div>
<div class="t r" style="left:744px;top:229.200px">选择</div>

<div class="abs" style="left:151px;top:261px;width:695px;height:10.500px;background:#c9d2d7;border-radius:2px"></div><div class="abs" style="left:254.500px;top:261px;width:487px;height:10.500px;background:#fff"></div><div class="rn" style="left:235.3px">1</div><div class="rn" style="left:223.0px">2</div><div class="rn" style="left:210.7px">3</div><div class="rn" style="left:198.4px">4</div><div class="rn" style="left:186.2px">5</div><div class="rn" style="left:173.9px">6</div><div class="rn" style="left:161.6px">7</div><div class="rn" style="left:149.3px">8</div><div class="rn" style="left:259.9px">1</div><div class="rn" style="left:272.2px">2</div><div class="rn" style="left:284.5px">3</div><div class="rn" style="left:296.8px">4</div><div class="rn" style="left:309.1px">5</div><div class="rn" style="left:321.3px">6</div><div class="rn" style="left:333.6px">7</div><div class="rn" style="left:345.9px">8</div><div class="rn" style="left:358.2px">9</div><div class="rn" style="left:370.5px">10</div><div class="rn" style="left:382.8px">11</div><div class="rn" style="left:395.1px">12</div><div class="rn" style="left:407.4px">13</div><div class="rn" style="left:419.7px">14</div><div class="rn" style="left:431.9px">15</div><div class="rn" style="left:444.2px">16</div><div class="rn" style="left:456.5px">17</div><div class="rn" style="left:468.8px">18</div><div class="rn" style="left:481.1px">19</div><div class="rn" style="left:493.4px">20</div><div class="rn" style="left:505.7px">21</div><div class="rn" style="left:518.0px">22</div><div class="rn" style="left:530.3px">23</div><div class="rn" style="left:542.6px">24</div><div class="rn" style="left:554.9px">25</div><div class="rn" style="left:567.1px">26</div><div class="rn" style="left:579.4px">27</div><div class="rn" style="left:591.7px">28</div><div class="rn" style="left:604.0px">29</div><div class="rn" style="left:616.3px">30</div><div class="rn" style="left:628.6px">31</div><div class="rn" style="left:640.9px">32</div><div class="rn" style="left:653.2px">33</div><div class="rn" style="left:665.5px">34</div><div class="rn" style="left:677.8px">35</div><div class="rn" style="left:690.0px">36</div><div class="rn" style="left:702.3px">37</div><div class="rn" style="left:714.6px">38</div><div class="rn" style="left:726.9px">39</div><div class="rn" style="left:739.2px">40</div><div class="rn" style="left:751.5px">41</div><div class="rn" style="left:763.8px">42</div><div class="rn" style="left:776.1px">43</div><div class="rn" style="left:788.4px">44</div><div class="rn" style="left:800.6px">45</div><div class="rn" style="left:812.9px">46</div><div class="rn" style="left:825.2px">47</div><svg style="left:248px;top:254px" width="14" height="28" viewBox="0 0 14 28"><path d="M3.500 17l3-3.500l3 3.500v3h-6z M3.500 20h6v5h-6z" fill="#fff" stroke="#6d747a" stroke-width="0.900"/></svg><svg style="left:398.500px;top:254px" width="14" height="14" viewBox="0 0 14 14"><path d="M2.500 2.500h8.500v2.500l-4.200 4.500l-4.300-4.500z" fill="#fff" stroke="#6d747a" stroke-width="0.900"/></svg><svg style="left:734px;top:264px" width="14" height="14" viewBox="0 0 14 14"><path d="M2.500 11.500h8.500v-3l-4.200-4.500l-4.300 4.500z" fill="#fff" stroke="#6d747a" stroke-width="0.900"/></svg><svg style="left:0;top:0" width="6" height="755" viewBox="0 0 6 755"><rect x="0" y="296.500" width="5.500" height="83.500" fill="#cbd4d8"/><rect x="0" y="380" width="5.500" height="355" fill="#fff"/><rect x="0.500" y="267" width="1.800" height="2.200" fill="#70787e"/><rect x="0.500" y="307" width="1.800" height="2.200" fill="#70787e"/><rect x="0.500" y="325" width="1.800" height="2.200" fill="#70787e"/><rect x="0.500" y="344" width="1.800" height="2.200" fill="#70787e"/><rect x="0.500" y="362" width="1.800" height="2.200" fill="#70787e"/><rect x="0.500" y="399" width="1.800" height="2.200" fill="#70787e"/><rect x="0.500" y="417" width="1.800" height="2.200" fill="#70787e"/><rect x="0.500" y="436" width="1.800" height="2.200" fill="#70787e"/><rect x="0.500" y="454" width="1.800" height="2.200" fill="#70787e"/><rect x="0.500" y="472" width="1.800" height="2.200" fill="#70787e"/><rect x="0.500" y="490" width="1.800" height="2.200" fill="#70787e"/><rect x="0.500" y="509" width="1.800" height="2.200" fill="#70787e"/><rect x="0.500" y="527" width="1.800" height="2.200" fill="#70787e"/><rect x="0.500" y="545" width="1.800" height="2.200" fill="#70787e"/><rect x="0.500" y="563" width="1.800" height="2.200" fill="#70787e"/><rect x="0.500" y="582" width="1.800" height="2.200" fill="#70787e"/><rect x="0.500" y="600" width="1.800" height="2.200" fill="#70787e"/><rect x="0.500" y="618" width="1.800" height="2.200" fill="#70787e"/><rect x="0.500" y="636" width="1.800" height="2.200" fill="#70787e"/><rect x="0.500" y="655" width="1.800" height="2.200" fill="#70787e"/><rect x="0.500" y="673" width="1.800" height="2.200" fill="#70787e"/><rect x="0.500" y="691" width="1.800" height="2.200" fill="#70787e"/><rect x="0.500" y="709" width="1.800" height="2.200" fill="#70787e"/><rect x="0.500" y="727" width="1.800" height="2.200" fill="#70787e"/></svg>

<div id="page" class="abs"></div>
<svg style="left:0;top:0" width="900" height="755" viewBox="0 0 900 755">
<path d="M232.500 382h23v-21.500M763 382h-22v-21.500" stroke="#cfd1d3" stroke-width="1" fill="none"/>
<g fill="#777b7f"><rect x="222.100" y="393.900" width="1.700" height="1.700"/><rect x="226.400" y="393.900" width="1.700" height="1.700"/><rect x="222.100" y="398.300" width="1.700" height="1.700"/><rect x="226.400" y="398.300" width="1.700" height="1.700"/><rect x="222.100" y="402.700" width="1.700" height="1.700"/><rect x="226.400" y="402.700" width="1.700" height="1.700"/></g>
<path d="M599.500 508.500h5M599.500 521.500h5M602 508.500v13" stroke="#222" stroke-width="1.100" fill="none"/>
</svg>
<div class="doc serif" style="left:405px;top:388px;font-size:18.800px;line-height:28px">凝聚各方力量</div>
<div class="doc serif" style="left:527.600px;top:388px;font-size:18.800px;line-height:28px">推进乡村振兴</div>
<div class="doc serif" style="left:349.800px;top:422.300px;font-size:18.780px;line-height:28px"><span class="q" style="text-align:right">“</span>德阳乡村振兴研究院<span class="q" style="text-align:left">”</span>建设与运营探索</div>
<div class="abs" style="left:312.300px;top:436.500px;width:42px;height:1px;background:#8a8a8a"></div>
<div class="doc hei" style="left:288px;top:498.200px;font-size:16.550px;line-height:24px">一、推进乡村振兴形势研判</div>
<div class="doc hei" style="left:283.500px;top:534.500px;font-size:13.600px;line-height:22px;letter-spacing:0.520px">（一）提高政治站位，践行政治使命</div>
<div class="doc hei" style="left:283.500px;top:572.200px;font-size:13.600px;line-height:22px;letter-spacing:0.520px">（二）顺应时代要求，契合乡村之变</div>
<div class="doc" style="left:283px;top:608.700px;font-size:13.400px;line-height:22px;letter-spacing:0.550px;color:#222">1.顺应社会演变历程</div>
<div class="doc" style="left:283px;top:645.200px;font-size:13.400px;line-height:22px;letter-spacing:0.550px;color:#222">2.紧跟国家治理阶段</div>
<div class="doc" style="left:283px;top:681.700px;font-size:13.400px;line-height:22px;letter-spacing:0.550px;color:#222">3.契合罗江三农发展</div>


<div class="abs" style="left:1002px;top:257px;width:46px;height:478px;background:#e2ecf0;border-left:1px solid #d5dfe3"></div>
<div class="abs" style="left:990.500px;top:288px;width:6px;height:44px;background:#c3ccd1;border-radius:3px"></div>
<svg style="left:985px;top:258px" width="62" height="480" viewBox="0 0 62 480">
<g fill="#5c646a">
<path d="M6.500 5.500h5l-2.500 2.500z"/><rect x="6.500" y="9" width="5" height="1.200"/><rect x="6.500" y="3.200" width="5" height="1"/>
<path d="M6.500 23.500h5l-2.500-3.500z"/>
<path d="M6.500 425h5l-2.500 3.500z"/>
<path d="M6.500 439.500h5l-2.500-3z M6.500 443h5l-2.500-3z"/>
<path d="M6.500 450.500h5v5h-5z M7.700 451.700v2.600h2.600v-2.600z" fill-rule="evenodd"/>
<path d="M6.500 463.500h5l-2.500 3z M6.500 467h5l-2.500 3z"/>
</g>
<g class="ic" stroke="#4a5056" stroke-width="1.100">
<path d="M33.500 17.500h12"/>
<path d="M35.500 46.500l7.500-8l2 2l-7.500 8l-3 1z M33.500 51.500h12"/>
<path d="M35 71.500l10 4l-4 1.800l3 4l-1.500 1.200l-3-4l-2.700 3.300z"/>
<circle cx="39.500" cy="111" r="5.800"/><path d="M37.700 109.500q0-2 1.800-2t1.800 1.700q0 1-1.800 2v1"/>
<path d="M33.500 140h12M33.500 147h12"/><circle cx="37" cy="140" r="1.800" fill="#e2ecf0"/><circle cx="42.500" cy="147" r="1.800" fill="#e2ecf0"/>
<rect x="34" y="171.500" width="10.500" height="10.500" rx="2"/><path d="M36 180l2.500-3l2 2M40.500 173v6M38.500 177.500l2 2l2-2"/>
<path d="M34 214.500l7-7l2.500 2.500l-7 7z M42.500 204l1 2.500l2.500 1l-2.500 1l-1 2.500"/>
<path d="M35 240q1-3 4-3l-1.500-1.500M44.500 246q-1 3-4 3l1.500 1.500M34.500 246l3.500 4M38 246l-3.500 4M41.500 241.500l1.800-4l1.800 4M42 240.500h2.500" stroke-width="0.900"/>
</g>
<g fill="none" stroke="#4a5056" stroke-width="1"><circle cx="35.300" cy="275.500" r="1.300"/><circle cx="39.700" cy="275.500" r="1.300"/><circle cx="44.100" cy="275.500" r="1.300"/></g>
</svg>
<div class="abs" style="left:1026.300px;top:417px;width:22px;height:53.500px;background:rgba(72,77,80,0.900);border-radius:5px 0 0 5px"></div>
<svg style="left:1030px;top:434px" width="14" height="20" viewBox="0 0 14 20"><path d="M3.500 3.500l7.500 7l-7.500 7" stroke="#b4b6b7" stroke-width="1.400" fill="none"/></svg>


<div class="abs" style="left:0;top:735px;width:1048px;height:20px;background:#dfe9ed;border-top:1px solid #e8eff3"></div>
<div class="t s" style="left:2.500px">页面: 1/4</div>
<div class="t s" style="left:64.500px">字数: 744</div>
<div class="t s" style="left:127.500px">拼写检查: 打开</div>
<div class="t s" style="left:225.500px">校对</div>
<div class="t s" style="left:283.500px">缺失字体</div>
<div class="abs" style="left:53.500px;top:739px;width:1px;height:12px;background:#d0d9de"></div>
<div class="abs" style="left:117px;top:739px;width:1px;height:12px;background:#d0d9de"></div>
<div class="abs" style="left:215px;top:739px;width:1px;height:12px;background:#d0d9de"></div>
<div class="abs" style="left:255px;top:739px;width:1px;height:12px;background:#d0d9de"></div>
<div class="abs" style="left:647px;top:735px;width:19.500px;height:20px;background:#c9d2d7"></div>
<svg style="left:0;top:735px" width="1048" height="20" viewBox="0 0 1048 20">
<path d="M197.500 8.500h5l-2.500 3z" fill="#444"/>
<path d="M269 13.500l4-7.500l4 7.500z" fill="#f0a526"/><path d="M273 8.500v2.500M273 12v.6" stroke="#fff" stroke-width="0.900"/>
<g class="ic" stroke="#3a3f44" stroke-width="1">
<path d="M617.500 9.500q5.500-5.500 11 0q-5.500 5.500-11 0z"/><circle cx="623" cy="9.500" r="1.700"/>
<rect x="652.500" y="4.500" width="8.500" height="10.500" rx="1"/><path d="M654.500 8h4.500M654.500 10.500h3"/>
<path d="M680.500 5.500h7.500M682.500 9.500h5.500M680.500 13.500h7.500M678 5.500h.5M678 13.500h.5"/>
<path d="M706.500 4.500l8 5l-8 5z"/>
<circle cx="736.200" cy="9.500" r="5"/><path d="M731.200 9.500h10M736.200 4.500q-3 5 0 10M736.200 4.500q3 5 0 10"/>
<path d="M758.500 13.500l1-3l6.500-6.500l2 2l-6.500 6.500z M764 6l2 2"/>
<path d="M791.500 7.500v-2.500h2.500M799 5h2.500v2.500M801.500 11.500v2.500h-2.500M794 14h-2.500v-2.500"/><rect x="794.300" y="7.300" width="4.400" height="4.400" rx="0.800"/>
<path d="M1024 7.500v-2.500h2.500M1031 5h2.500v2.500M1033.500 11.500v2.500h-2.500M1026.500 14h-2.500v-2.500M1024 5l3 3M1033.500 5l-3 3M1024 14l3-3M1033.500 14l-3-3" stroke-width="1.100"/>
</g>
<path d="M779 4v12" stroke="#d0d9de"/>
<path d="M855.500 8.500h4.600l-2.300 2.800z" fill="#444"/>
<path d="M876 9.500h9.500" stroke="#2e3338" stroke-width="1.600"/>
<path d="M897 9.500h41" stroke="#4a78d0" stroke-width="1.200"/><path d="M938 9.500h47" stroke="#b9c2c8" stroke-width="1"/>
<circle cx="941" cy="9.500" r="3.800" fill="#fff" stroke="#c5ccd2" stroke-width="0.800"/><circle cx="941" cy="9.500" r="1.300" fill="#8a9096"/>
<path d="M996.500 9.500h9M1001 5v9" stroke="#2e3338" stroke-width="1.500"/>
</svg>
<div class="t s" style="left:819.500px;color:#555a60">106%</div>
<!-- floating toolbar -->
<div class="abs" style="left:5.500px;top:671.500px;width:121.500px;height:40px;background:#8b8e91;border-radius:4px"></div>
<svg style="left:5px;top:671px" width="124" height="42" viewBox="0 0 124 42">
<circle cx="22.200" cy="20.500" r="11" fill="#c4c6c8"/><circle cx="18.500" cy="17.500" r="1.400" fill="#8b8e91"/><circle cx="26" cy="17.500" r="1.400" fill="#8b8e91"/><path d="M16.500 22.500q5.700 6 11.400 0" stroke="#8b8e91" stroke-width="1.500" fill="none"/>
<path d="M47 11h21.500v16h-15.500l-6 4.500z" fill="#c4c6c8"/><circle cx="52.500" cy="19" r="1.300" fill="#8b8e91"/><circle cx="57.700" cy="19" r="1.300" fill="#8b8e91"/><circle cx="63" cy="19" r="1.300" fill="#8b8e91"/>
<path d="M83.500 8v25" stroke="#a3a6a9" stroke-width="1"/>
<path d="M106.500 15l-7.500 5.500l7.500 5.500z" fill="#c9cbcd"/>
</svg>

</div>

</body>
</html>
